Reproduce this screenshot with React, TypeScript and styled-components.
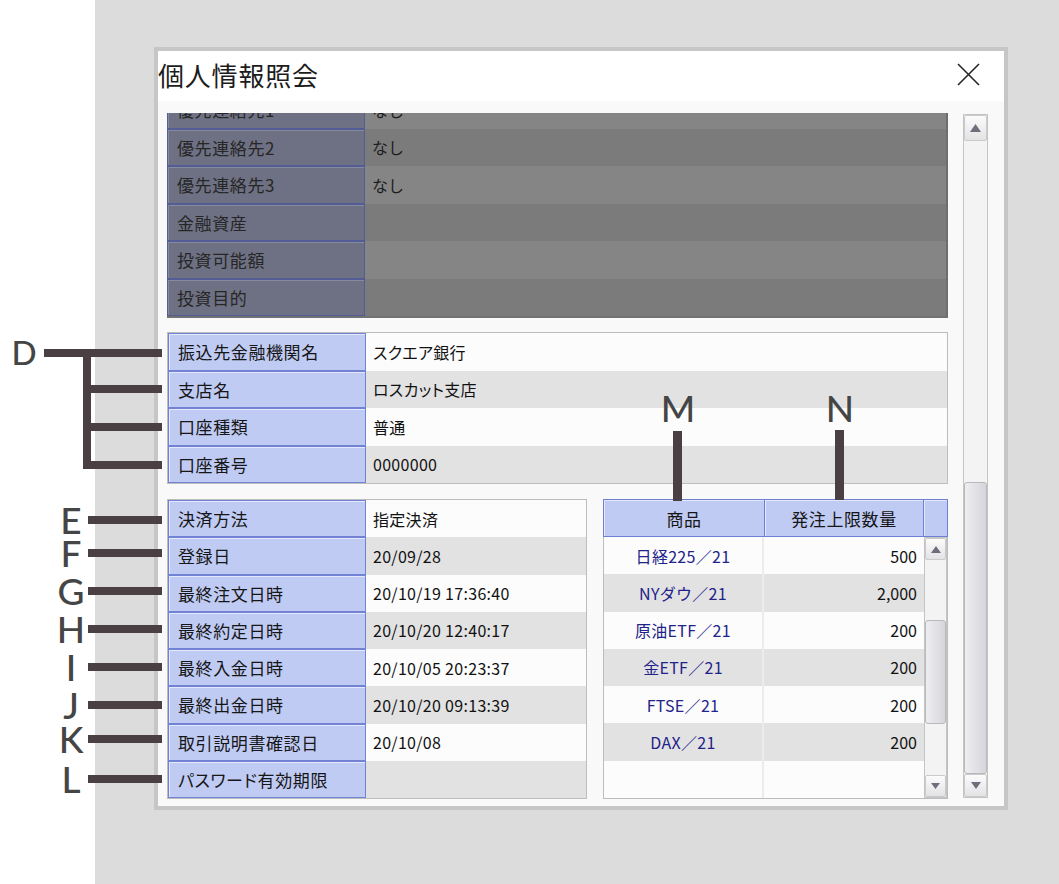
import styled, { createGlobalStyle } from "styled-components";

const GlobalStyle = createGlobalStyle`
  html, body {
    margin: 0;
    padding: 0;
    background: #ffffff;
  }
`;

const jp = `"Noto Sans CJK JP", "Noto Sans", sans-serif`;

const Stage = styled.div`
  position: relative;
  width: 1059px;
  height: 884px;
  display: flex;
  overflow: hidden;
  background: #ffffff;
  font-family: ${jp};
`;

const Gutter = styled.div`
  width: 95px;
  flex-shrink: 0;
  background: #ffffff;
`;

const Backdrop = styled.div`
  flex: 1;
  background: #dcdcdc;
  padding: 47px 0 0 59px;
`;

const Dialog = styled.div`
  width: 854px;
  height: 763px;
  box-sizing: border-box;
  border: 4px solid #c6c6c6;
  background: #ffffff;
  display: flex;
  flex-direction: column;
`;

const TitleBar = styled.div`
  height: 50px;
  flex-shrink: 0;
  display: flex;
  align-items: center;
  justify-content: space-between;
  padding: 0 24px 0 0;
`;

const Title = styled.h1`
  margin: 0 0 3px 0;
  font-family: ${jp};
  font-size: 26px;
  font-weight: 400;
  letter-spacing: 0.8px;
  line-height: 1;
  color: #1c1c1c;
`;

const CloseButton = styled.div`
  width: 23px;
  height: 23px;
  margin-bottom: 3px;
  display: flex;
`;

const Body = styled.div`
  flex: 1;
  background: #f9f9f9;
  display: flex;
  gap: 15px;
  padding: 12px 16px 7px 9px;
`;

const Main = styled.div`
  width: 781px;
  display: flex;
  flex-direction: column;
`;

/* ---------- dimmed (scrolled) section ---------- */

const DimViewport = styled.div`
  height: 205px;
  box-sizing: border-box;
  overflow: hidden;
  border-right: 2px solid #6e6e6e;
  border-bottom: 2px solid #727272;
  background: #7b7b7b;
`;

const DimList = styled.div`
  margin-top: -22px;
  display: flex;
  flex-direction: column;
`;

const DimRow = styled.div`
  height: 37.5px;
  display: flex;
`;

const DimLabel = styled.div`
  width: 198px;
  box-sizing: border-box;
  border: 1px solid #535c94;
  box-shadow: inset 1px 1px 0 #868aa0;
  background: #6e7183;
  display: flex;
  align-items: center;
  padding-left: 9px;
  font-size: 17px;
  letter-spacing: 0.6px;
  color: #262626;
`;

const DimValue = styled.div<{ $alt: boolean }>`
  flex: 1;
  display: flex;
  align-items: center;
  padding-left: 7px;
  background: ${(p) => (p.$alt ? "#7b7b7b" : "#858585")};
  font-size: 16px;
  color: #1c1c1c;
`;

/* ---------- key / value tables ---------- */

const Table = styled.div<{ $h: number; $w?: number }>`
  height: ${(p) => p.$h}px;
  width: ${(p) => (p.$w ? `${p.$w}px` : "auto")};
  box-sizing: border-box;
  border: 1px solid #bdbdbd;
  background: #fcfcfc;
  display: flex;
  flex-direction: column;
`;

const Row = styled.div`
  flex: 1;
  display: flex;
  min-height: 0;
`;

const Label = styled.div`
  width: 198px;
  flex-shrink: 0;
  box-sizing: border-box;
  border: 1px solid #7282d4;
  box-shadow: inset 1px 1px 0 #e4e8fc;
  background: #c0cbf4;
  display: flex;
  align-items: center;
  padding-left: 9px;
  font-size: 17px;
  letter-spacing: 0.6px;
  font-feature-settings: "palt";
  color: #161616;
`;

const Value = styled.div<{ $alt: boolean }>`
  flex: 1;
  display: flex;
  align-items: center;
  padding-left: 7px;
  background: ${(p) => (p.$alt ? "#e2e2e2" : "#fcfcfc")};
  font-size: 16px;
  letter-spacing: 0.3px;
  font-feature-settings: "palt";
  color: #111111;
`;

const BankGap = styled.div`
  height: 14px;
  flex-shrink: 0;
`;

const LowerRow = styled.div`
  margin-top: 15px;
  display: flex;
  gap: 16px;
`;

/* ---------- order limit table ---------- */

const LimitTable = styled.div`
  width: 345px;
  height: 300px;
  display: flex;
  flex-direction: column;
`;

const HeadRow = styled.div`
  height: 38px;
  box-sizing: border-box;
  display: flex;
  border: 1px solid #6f7fd3;
  background: #c0cbf4;
`;

const HeadCell = styled.div<{ $w?: number }>`
  width: ${(p) => (p.$w ? `${p.$w}px` : "auto")};
  flex: ${(p) => (p.$w ? "none" : "1")};
  box-sizing: border-box;
  border-right: 1px solid #6f7fd3;
  box-shadow: inset 1px 1px 0 #e4e8fc;
  display: flex;
  align-items: center;
  justify-content: center;
  font-size: 17px;
  letter-spacing: 0.6px;
  color: #161616;

  &:last-child {
    border-right: none;
  }
`;

const LimitBody = styled.div`
  flex: 1;
  box-sizing: border-box;
  border: 1px solid #bdbdbd;
  border-top: none;
  display: flex;
  background: #fcfcfc;
`;

const LimitRows = styled.div`
  flex: 1;
  display: flex;
  flex-direction: column;
`;

const LimitRow = styled.div<{ $alt: boolean }>`
  flex: 1;
  display: flex;
  background: ${(p) => (p.$alt ? "#e2e2e2" : "#fcfcfc")};
`;

const ProductCell = styled.div`
  width: 160px;
  box-sizing: border-box;
  border-right: 2px solid #ececec;
  display: flex;
  align-items: center;
  justify-content: center;
  font-size: 16px;
  letter-spacing: 0.3px;
  color: #22238a;
`;

const QtyCell = styled.div`
  flex: 1;
  display: flex;
  align-items: center;
  justify-content: flex-end;
  padding-right: 7px;
  font-size: 16px;
  color: #111111;
`;

/* ---------- scrollbars ---------- */

const ScrollBar = styled.div<{ $w: number; $m?: number }>`
  width: ${(p) => p.$w}px;
  flex-shrink: 0;
  box-sizing: border-box;
  margin: ${(p) => p.$m ?? 0}px 0;
  border: 1px solid #c4c4c4;
  background: #f3f3f3;
  display: flex;
  flex-direction: column;
`;

const ArrowButton = styled.div<{ $h: number }>`
  height: ${(p) => p.$h}px;
  flex-shrink: 0;
  box-sizing: border-box;
  border: 1px solid #cacaca;
  border-radius: 2px;
  background: linear-gradient(#fbfbfb, #e3e3e6);
  display: flex;
  align-items: center;
  justify-content: center;
`;

const Track = styled.div`
  flex: 1;
  display: flex;
  flex-direction: column;
`;

const Thumb = styled.div<{ $top: number; $h: number }>`
  margin-top: ${(p) => p.$top}px;
  height: ${(p) => p.$h}px;
  box-sizing: border-box;
  border: 1px solid #b8b8bd;
  border-radius: 3px;
  background: linear-gradient(to right, #eeeef1, #d5d5db);
`;

/* ---------- callouts ---------- */

const Leaders = styled.svg`
  position: absolute;
  left: 0;
  top: 0;
  pointer-events: none;
`;

const Letter = styled.span<{ $cx: number; $cy: number; $size: number }>`
  position: absolute;
  left: ${(p) => p.$cx - 16}px;
  top: ${(p) => p.$cy - 15}px;
  width: 32px;
  height: 28px;
  display: flex;
  align-items: center;
  justify-content: center;
  font-family: Lato, "Open Sans", sans-serif;
  font-size: ${(p) => p.$size}px;
  font-weight: 500;
  line-height: 28px;
  color: #454545;
`;

function Arrow({ dir, size }: { dir: "up" | "down"; size: number }) {
  const w = size;
  const h = Math.round(size * 0.7);
  return (
    <svg width={w} height={h} viewBox={`0 0 ${w} ${h}`}>
      {dir === "up" ? (
        <polygon points={`0,${h} ${w},${h} ${w / 2},0`} fill="#6e6e7c" />
      ) : (
        <polygon points={`0,0 ${w},0 ${w / 2},${h}`} fill="#6e6e7c" />
      )}
    </svg>
  );
}

function Scroller(props: {
  w: number;
  m?: number;
  upH: number;
  downH: number;
  top: number;
  thumb: number;
  arrow: number;
}) {
  return (
    <ScrollBar $w={props.w} $m={props.m}>
      <ArrowButton $h={props.upH}>
        <Arrow dir="up" size={props.arrow} />
      </ArrowButton>
      <Track>
        <Thumb $top={props.top} $h={props.thumb} />
      </Track>
      <ArrowButton $h={props.downH}>
        <Arrow dir="down" size={props.arrow - 1} />
      </ArrowButton>
    </ScrollBar>
  );
}

const dimRows = [
  ["優先連絡先1", "なし"],
  ["優先連絡先2", "なし"],
  ["優先連絡先3", "なし"],
  ["金融資産", ""],
  ["投資可能額", ""],
  ["投資目的", ""],
];

const bankRows = [
  ["振込先金融機関名", "スクエア銀行"],
  ["支店名", "ロスカット支店"],
  ["口座種類", "普通"],
  ["口座番号", "0000000"],
];

const infoRows = [
  ["決済方法", "指定決済"],
  ["登録日", "20/09/28"],
  ["最終注文日時", "20/10/19 17:36:40"],
  ["最終約定日時", "20/10/20 12:40:17"],
  ["最終入金日時", "20/10/05 20:23:37"],
  ["最終出金日時", "20/10/20 09:13:39"],
  ["取引説明書確認日", "20/10/08"],
  ["パスワード有効期限", ""],
];

const limits = [
  ["日経225／21", "500"],
  ["NYダウ／21", "2,000"],
  ["原油ETF／21", "200"],
  ["金ETF／21", "200"],
  ["FTSE／21", "200"],
  ["DAX／21", "200"],
  ["", ""],
];

const sideLetters = [
  { ch: "E", cy: 520 },
  { ch: "F", cy: 553 },
  { ch: "G", cy: 591 },
  { ch: "H", cy: 629 },
  { ch: "I", cy: 667 },
  { ch: "J", cy: 705 },
  { ch: "K", cy: 739 },
  { ch: "L", cy: 779 },
];

const ink = "#4a3f42";

export default function App() {
  return (
    <>
      <GlobalStyle />
      <Stage>
        <Gutter />
        <Backdrop>
          <Dialog>
            <TitleBar>
              <Title>個人情報照会</Title>
              <CloseButton>
                <svg width="23" height="23" viewBox="0 0 23 23">
                  <path d="M1 1 L22 22 M22 1 L1 22" stroke="#262626" strokeWidth="1.6" fill="none" />
                </svg>
              </CloseButton>
            </TitleBar>
            <Body>
              <Main>
                <DimViewport>
                  <DimList>
                    {dimRows.map(([k, v], i) => (
                      <DimRow key={k}>
                        <DimLabel>{k}</DimLabel>
                        <DimValue $alt={i % 2 === 1}>{v}</DimValue>
                      </DimRow>
                    ))}
                  </DimList>
                </DimViewport>
                <BankGap />
                <Table $h={152}>
                  {bankRows.map(([k, v], i) => (
                    <Row key={k}>
                      <Label>{k}</Label>
                      <Value $alt={i % 2 === 1}>{v}</Value>
                    </Row>
                  ))}
                </Table>
                <LowerRow>
                  <Table $h={300} $w={420}>
                    {infoRows.map(([k, v], i) => (
                      <Row key={k}>
                        <Label>{k}</Label>
                        <Value $alt={i % 2 === 1}>{v}</Value>
                      </Row>
                    ))}
                  </Table>
                  <LimitTable>
                    <HeadRow>
                      <HeadCell $w={161}>商品</HeadCell>
                      <HeadCell $w={159}>発注上限数量</HeadCell>
                      <HeadCell />
                    </HeadRow>
                    <LimitBody>
                      <LimitRows>
                        {limits.map(([p, q], i) => (
                          <LimitRow key={i} $alt={i % 2 === 1}>
                            <ProductCell>{p}</ProductCell>
                            <QtyCell>{q}</QtyCell>
                          </LimitRow>
                        ))}
                      </LimitRows>
                      <Scroller w={23} upH={22} downH={22} top={60} thumb={104} arrow={10} />
                    </LimitBody>
                  </LimitTable>
                </LowerRow>
              </Main>
              <Scroller w={25} m={1} upH={26} downH={23} top={341} thumb={292} arrow={11} />
            </Body>
          </Dialog>
        </Backdrop>

        <Leaders width="1059" height="884" viewBox="0 0 1059 884">
          <rect x="44" y="349" width="118" height="8" fill={ink} />
          <rect x="83" y="349" width="8" height="120" fill={ink} />
          <rect x="83" y="385" width="79" height="8" fill={ink} />
          <rect x="83" y="423" width="79" height="8" fill={ink} />
          <rect x="83" y="461" width="79" height="8" fill={ink} />
          {sideLetters.map((l) => (
            <rect key={l.ch} x="88" y={l.cy - 4} width="74" height="8" fill={ink} />
          ))}
          <rect x="673" y="431" width="9" height="70" fill={ink} />
          <rect x="835" y="430" width="9" height="70" fill={ink} />
        </Leaders>
        <Letter $cx={24} $cy={353} $size={33}>D</Letter>
        {sideLetters.map((l) => (
          <Letter key={l.ch} $cx={71} $cy={l.cy + 1} $size={37}>
            {l.ch}
          </Letter>
        ))}
        <Letter $cx={678} $cy={409} $size={37}>M</Letter>
        <Letter $cx={840} $cy={409} $size={37}>N</Letter>
      </Stage>
    </>
  );
}
